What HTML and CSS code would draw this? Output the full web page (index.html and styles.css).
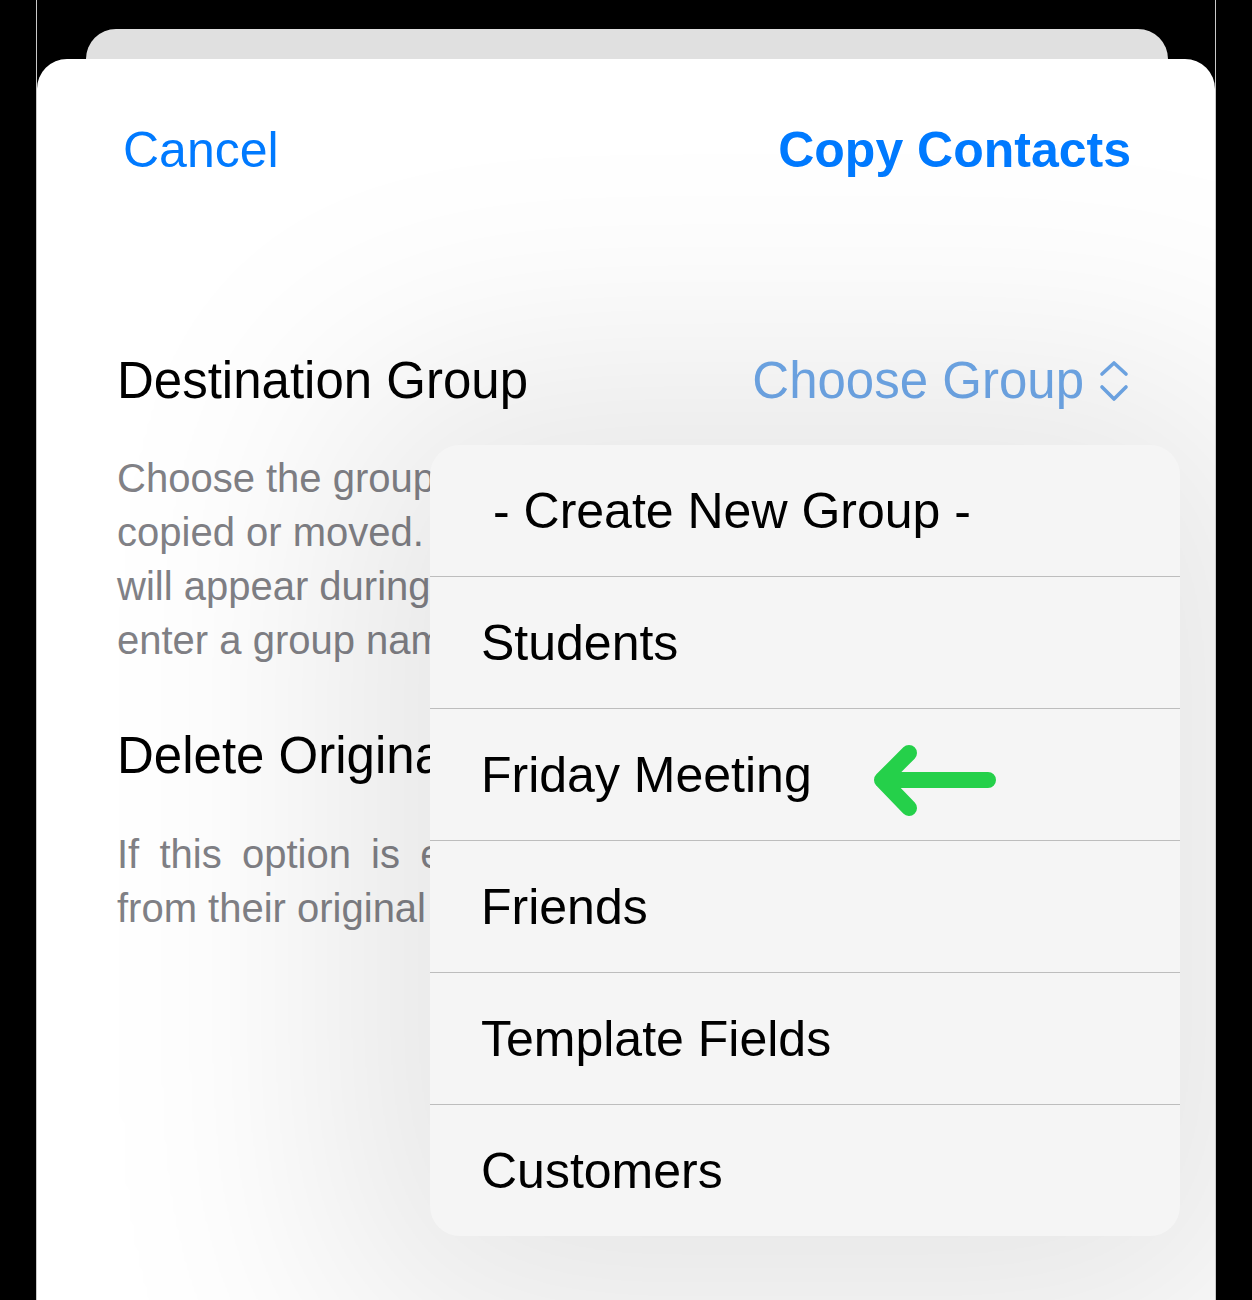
FILE: index.html
```html
<!DOCTYPE html>
<html lang="en">
<head>
    <meta charset="UTF-8">
    <meta name="viewport" content="width=device-width, initial-scale=1.0">
    <title>Copy Contacts</title>
    <link rel="stylesheet" href="styles.css">
</head>
<body>
    <div class="screen">
        <div class="back-card"></div>

        <div class="sheet">
            <div class="nav">
                <span class="nav-btn">Cancel</span>
                <span class="nav-btn done">Copy Contacts</span>
            </div>

            <div class="setting-row group-row">
                <span class="setting-label">Destination Group</span>
                <span class="picker">
                    Choose Group
                    <svg class="updown" width="32" height="48" viewBox="0 0 32 48">
                        <path d="M4 17 L16 6 L28 17 M4 30 L16 42 L28 30" fill="none" stroke="currentColor" stroke-width="3.6" stroke-linecap="round" stroke-linejoin="round"/>
                    </svg>
                </span>
            </div>

            <p class="hint hint-group">
                Choose the group into which contacts will be<br>
                copied or moved. If you create a new group, a<br>
                will appear during the copy asking you to<br>
                enter a group name.
            </p>

            <div class="setting-row delete-row">
                <span class="setting-label">Delete Original</span>
                <span class="switch"><span class="knob"></span></span>
            </div>

            <p class="hint hint-delete">
                <span class="full-line">If this option is enabled, the contacts will be removed</span>
                from their original group after being copied.
            </p>

            <!-- group picker menu -->
            <div class="menu">
                <div class="menu-item create">- Create New Group -</div>
                <div class="menu-item">Students</div>
                <div class="menu-item">
                    Friday Meeting
                    <svg class="pointer" width="132" height="86" viewBox="0 0 132 86">
                        <path d="M40 15 L13 42 L40 70 M13 42 L119 42" fill="none" stroke="#25d04a" stroke-width="16" stroke-linecap="round" stroke-linejoin="round"/>
                    </svg>
                </div>
                <div class="menu-item">Friends</div>
                <div class="menu-item">Template Fields</div>
                <div class="menu-item">Customers</div>
            </div>
        </div>
    </div>
</body>
</html>
```

FILE: styles.css
```css
body {
    margin: 0;
    height: 1300px;
    overflow: hidden;
    background: #000;
    font-family: "Liberation Sans", Arial, sans-serif;
}

.screen {
    margin-left: 36px;
    width: 1180px;
    height: 1300px;
    padding-top: 29px;
    box-sizing: border-box;
    border-left: 1px solid #c9c9c9;
    border-right: 1px solid #c9c9c9;
}

.back-card {
    height: 30px;
    margin: 0 47px 0 49px;
    background: #e0e0e0;
    border-radius: 30px 30px 0 0;
}

.sheet {
    position: relative;
    height: 1241px;
    padding: 0 80px;
    box-sizing: border-box;
    background: #fff;
    border-radius: 30px 30px 0 0;
    overflow: hidden;
}

.nav {
    display: flex;
    justify-content: space-between;
    padding: 61px 4px 0 6px;
    font-size: 50px;
    line-height: 60px;
    color: #007aff;
}

.nav-btn.done {
    font-weight: bold;
}

.setting-row {
    display: flex;
    justify-content: space-between;
    align-items: center;
    font-size: 51px;
    line-height: 60px;
    color: #000;
}

.group-row {
    margin-top: 171px;
}

.picker {
    display: flex;
    align-items: center;
    gap: 14px;
    color: #70a9ea;
}

.updown {
    margin-right: 5px;
}

.hint {
    margin: 40px 0 0;
    font-size: 40px;
    line-height: 54px;
    color: #818186;
}

.delete-row {
    margin-top: 59px;
}

.hint-delete {
    margin-top: 41px;
}

.full-line {
    display: block;
    text-align: justify;
    text-align-last: justify;
}

.switch {
    position: relative;
    width: 100px;
    height: 60px;
    border-radius: 30px;
    background: #e5e5ea;
}

.knob {
    position: absolute;
    top: 4px;
    left: 4px;
    width: 52px;
    height: 52px;
    border-radius: 50%;
    background: #fff;
    box-shadow: 0 3px 8px rgba(0, 0, 0, 0.15);
}

.menu {
    position: absolute;
    left: 393px;
    top: 386px;
    width: 750px;
    background: #f5f5f5;
    border-radius: 30px;
    box-shadow: 0 20px 300px 90px rgba(0, 0, 0, 0.1);
}

.menu-item {
    display: flex;
    align-items: center;
    height: 131px;
    padding-left: 51px;
    font-size: 50px;
    color: #000;
}

.menu-item + .menu-item {
    border-top: 1px solid #bdbdbd;
}

.menu-item.create {
    padding-left: 63px;
}

.pointer {
    margin: 13px 0 0 57px;
}
```
